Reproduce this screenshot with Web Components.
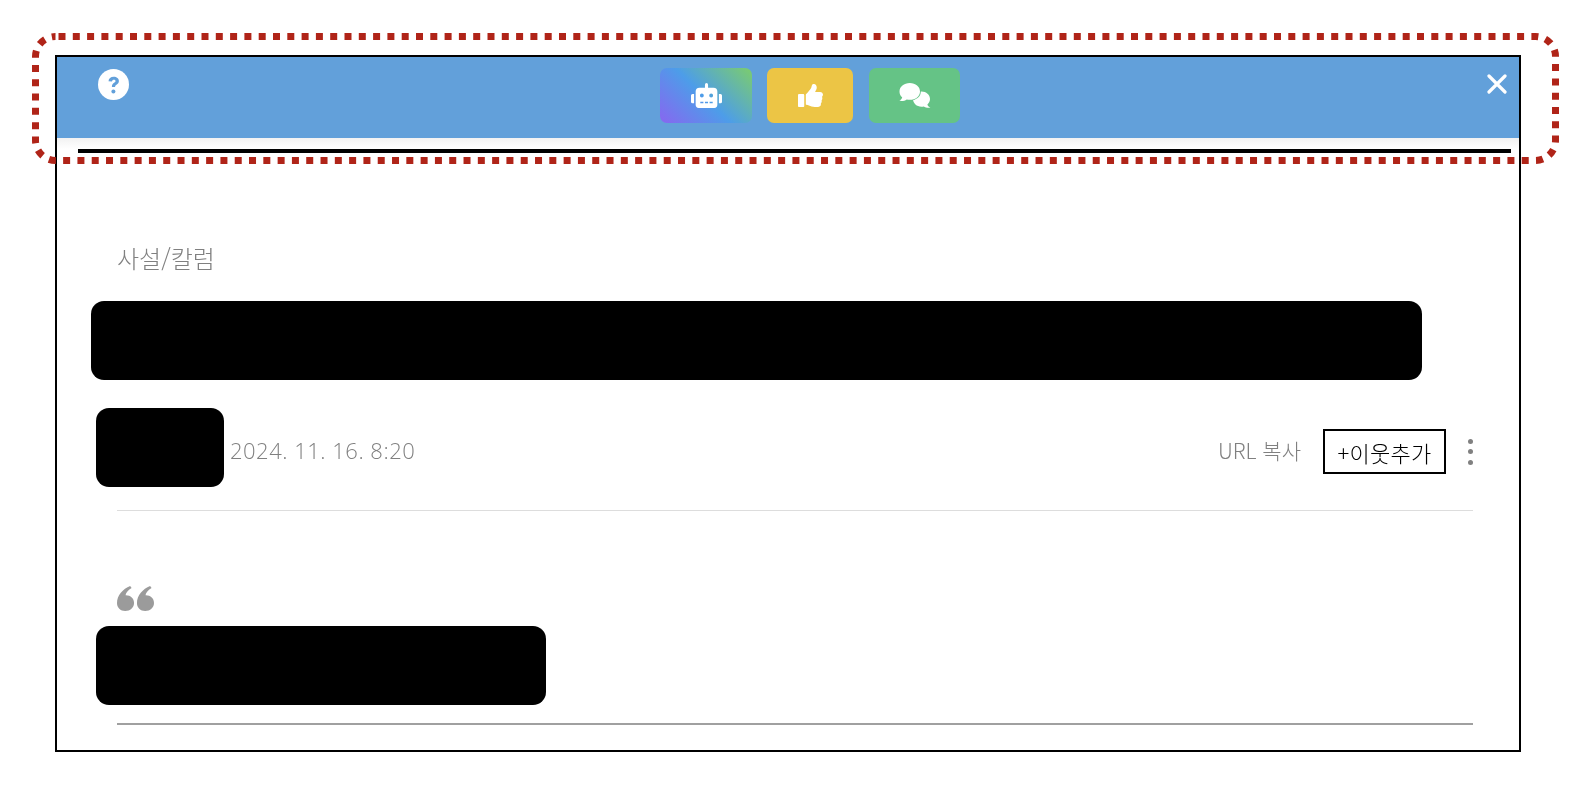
<!DOCTYPE html>
<html lang="ko"><head><meta charset="utf-8"><style>
html,body{margin:0;background:#fff}
body{font-family:"Noto Sans CJK KR","Noto Sans",sans-serif;width:1580px;height:788px;overflow:hidden}
</style></head><body>
<article-frame>
  <top-bar></top-bar>
  <article-body></article-body>
</article-frame>
<script>
function def(name, html){
  customElements.define(name, class extends HTMLElement{
    constructor(){super();this.attachShadow({mode:'open'}).innerHTML=html;}
  });
}
def('article-frame',`<style>
:host{display:block;padding:55px 59px 0 55px;position:relative}
.box{border:2px solid #000;height:693px;box-sizing:content-box;width:1462px}
svg{position:absolute;left:0;top:0;pointer-events:none}
</style>
<div class="box"><slot></slot></div>
<svg width="1580" height="170"><rect x="35.5" y="36.5" width="1520" height="124" rx="20" fill="none" stroke="#b02418" stroke-width="7" stroke-dasharray="7 7.3" stroke-dashoffset="-3"/></svg>`);
def('top-bar',`<style>
:host{display:block}
.blue{height:81px;background:#62a0da;display:grid;grid-template-columns:1fr auto 1fr;align-items:start}
.help{margin:12px 0 0 41px;width:31px;height:31px}
.close{justify-self:end;margin:17px 12px 0 0;width:20px;height:20px}
.btns{display:flex;gap:15px;padding-top:11px;margin-left:44px}
.b1{width:92px}.b2{width:86px}.b3{width:91px;margin-left:1px}
.fade{height:11px;background:linear-gradient(#f2f2f2,#fff)}
.rule{height:4px;background:#000;margin:0 8px 0 21px}
</style>
<div class="blue">
  <svg class="help" viewBox="0 0 31 31"><circle cx="15.5" cy="15.5" r="15.5" fill="#fff"/><path d="M10.500 12.2c.2-2.800 2.200-4.500 5.200-4.500 3 0 5.200 1.700 5.200 4.300 0 1.900-1 2.900-2.400 3.800-1.100.7-1.400 1.100-1.400 2.200h-3.200c0-2.100.6-3.200 2.200-4.200 1-.6 1.400-1 1.400-1.700 0-.8-.7-1.300-1.600-1.300-1 0-1.800.6-1.900 1.600z" fill="#62a0da"/><circle cx="15.400" cy="22.400" r="2" fill="#62a0da"/></svg>
  <div class="btns">
    <icon-btn class="b1" style="background:linear-gradient(45deg,#8866f0 0%,#4d9de9 48%,#7ccd6c 100%)"><svg width="31" height="25" viewBox="0 0 640 512" fill="#fff"><path d="M32,224H64V416H32A31.96166,31.96166,0,0,1,0,384V256A31.96166,31.96166,0,0,1,32,224Zm512-48V448a64.06328,64.06328,0,0,1-64,64H160a64.06328,64.06328,0,0,1-64-64V176a79.974,79.974,0,0,1,80-80H288V32a32,32,0,0,1,64,0V96H464A79.974,79.974,0,0,1,544,176ZM264,256a40,40,0,1,0-40,40A39.997,39.997,0,0,0,264,256Zm-8,128H192v32h64Zm96,0H288v32h64ZM456,256a40,40,0,1,0-40,40A39.997,39.997,0,0,0,456,256Zm-8,128H384v32h64ZM640,256V384a31.96166,31.96166,0,0,1-32,32H576V224h32A31.96166,31.96166,0,0,1,640,256Z"/></svg></icon-btn>
    <icon-btn class="b2" style="background:#ecc545"><svg width="25" height="23" viewBox="0 0 512 512" preserveAspectRatio="none" fill="#fff"><path d="M104 224H24c-13.255 0-24 10.745-24 24v240c0 13.255 10.745 24 24 24h80c13.255 0 24-10.745 24-24V248c0-13.255-10.745-24-24-24zM384 81.452c0 42.416-25.97 66.208-33.277 94.548h101.723c33.397 0 59.397 27.746 59.553 58.098.084 17.938-7.546 37.249-19.439 49.197l-.11.11c9.836 23.337 8.237 56.037-9.308 79.469 8.681 25.895-.069 57.704-16.382 74.757 4.298 17.598 2.244 32.575-6.148 44.632C440.202 511.587 389.616 512 346.839 512l-2.845-.001c-48.287-.017-87.806-17.598-119.56-31.725-15.957-7.099-36.821-15.887-52.651-16.178-6.54-.12-11.783-5.457-11.783-11.998v-213.77c0-3.2 1.282-6.271 3.558-8.521 39.614-39.144 56.648-80.587 89.117-113.111 14.804-14.832 20.188-37.236 25.393-58.902C282.515 39.293 291.817 0 312 0c24 0 72 8 72 81.452z"/></svg></icon-btn>
    <icon-btn class="b3" style="background:#65c386"><svg width="32" height="25" viewBox="0 0 32 25"><path d="M22.500 8.500c4.800 0 8.500 3.200 8.500 7.500 0 2.200-1 4-2.600 5.400.3 1.200 1.300 2.400 3 3.300-2.700.3-5.200-.2-6.700-1.300-.7.2-1.500.3-2.200.3-4.800 0-8.500-3.400-8.500-7.700s3.700-7.500 8.500-7.500z" fill="#fff"/><path d="M10.800 0C16.600 0 21 3.600 21 8.400s-4.400 8.400-10.200 8.400c-1.100 0-2.100-.1-3.100-.4C6 17.700 3.300 18.200.4 17.800c1.500-.9 2.500-2.200 2.800-3.500C1.400 12.800.500 10.700.500 8.400.5 3.600 5 0 10.800 0z" fill="#fff" stroke="#65c386" stroke-width="1.600" paint-order="stroke"/></svg></icon-btn>
  </div>
  <svg class="close" viewBox="0 0 20 20"><path d="M2 2l16 16M18 2L2 18" stroke="#fff" stroke-width="3.200" stroke-linecap="round"/></svg>
</div>
<div class="fade"></div>
<div class="rule"></div>`);
def('icon-btn',`<style>
:host{display:flex;align-items:center;justify-content:center;height:55px;border-radius:7px}
</style><slot></slot>`);
def('redact-block',`<style>:host{display:block;background:#000;border-radius:13px;flex:none}</style>`);
def('article-body',`<style>
:host{display:block;color:#808080;font-weight:300;will-change:transform}
.cat{font-size:24px;line-height:32px;margin:89px 0 0 60px;height:59px}
.title{width:1331px;height:79px;margin:0 0 0 34px}
.meta{display:flex;align-items:center;margin:28px 46px 0 39px;height:79px}
.author{width:128px;height:79px}
.date{margin:4px 0 0 6px;font:300 22px/30px "Open Sans","Noto Sans CJK KR",sans-serif;letter-spacing:.5px}
.right{margin-left:auto;display:flex;align-items:center;margin-top:8px}
.url{font-size:21px;line-height:28px;margin:0 22px 3px 0}
.add{box-sizing:border-box;width:123px;height:45px;border:2px solid #000;color:#000;font-size:22px;font-weight:300;letter-spacing:.3px;display:flex;align-items:center;justify-content:center}
.dots{margin-left:22px;display:flex;flex-direction:column;gap:5.500px}
.dots i{display:block;width:5px;height:5px;border-radius:50%;background:#808080}
.hr{margin:23px 46px 0 60px;height:1px;background:#ddd}
.quote{display:block;margin:75px 0 0 60px;width:37px;height:25px}
.q{width:450px;height:79px;margin:15px 0 0 39px}
.hr2{margin:18px 46px 0 60px;height:2px;background:#a0a0a0}
</style>
<div class="cat">사설/칼럼</div>
<redact-block class="title"></redact-block>
<div class="meta">
  <redact-block class="author"></redact-block>
  <span class="date">2024. 11. 16. 8:20</span>
  <div class="right"><span class="url">URL 복사</span><div class="add">+이웃추가</div><div class="dots"><i></i><i></i><i></i></div></div>
</div>
<div class="hr"></div>
<svg class="quote" viewBox="0 0 38 25" fill="#9b9b9b" preserveAspectRatio="none"><path d="M8.500 25C3.500 25 0 21.500 0 17 0 9.500 6 3 13.500 0l1.500 2C11 4.500 9 7 8.800 9.300c5-.2 8.700 3 8.700 7.700 0 4.700-4 8-9 8z"/><path d="M29 25c-5 0-8.500-3.500-8.500-8C20.500 9.500 26.500 3 34 0l1.500 2c-4 2.500-6 5-6.200 7.300 5-.2 8.700 3 8.700 7.700 0 4.700-4 8-9 8z"/></svg>
<redact-block class="q"></redact-block>
<div class="hr2"></div>`);
</script>
</body></html>
